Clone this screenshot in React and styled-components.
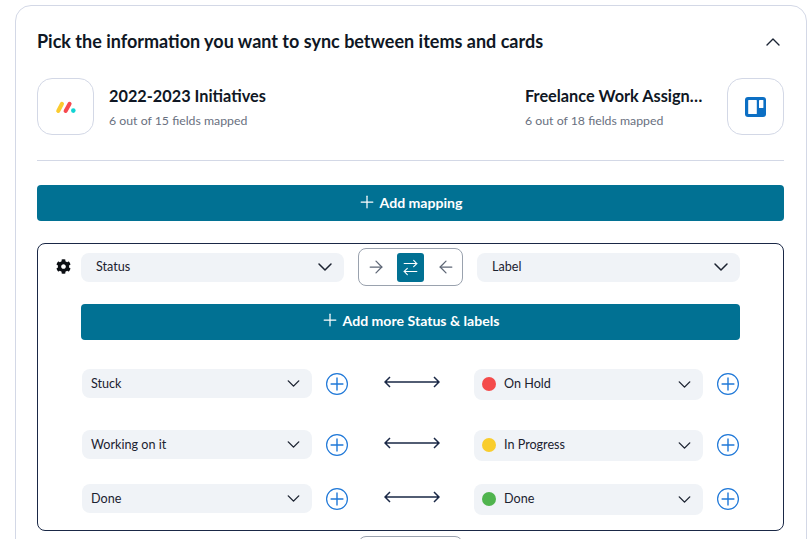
import React from 'react'
import styled, { createGlobalStyle } from 'styled-components'
import { ArrowLeft, ArrowRight, ArrowRightLeft, ChevronDown, ChevronUp, Plus } from 'lucide-react'
import { FaCog } from 'react-icons/fa'

const GlobalStyle = createGlobalStyle`
  html, body {
    margin: 0;
    height: 539px;
    overflow: hidden;
    background: #fff;
    font-family: 'Lato', sans-serif;
    color: #0f1724;
  }
  * { box-sizing: border-box; }
`

const Card = styled.section`
  margin: 5px 3px 0 15px;
  padding: 24px 22px 0 21px;
  border: 1px solid #d3d8e6;
  border-radius: 16px;
`
const TitleRow = styled.header`
  display: flex;
  align-items: center;
  justify-content: space-between;
  height: 24px;
`
const Title = styled.h2`
  margin: 0;
  padding-bottom: 2px;
  font-size: 18px;
  font-weight: 700;
  line-height: 24px;
`
const Collapse = styled.span`
  display: flex;
  margin-right: -1px;
  color: #1b2434;
`
const BoardsRow = styled.div`
  display: flex;
  justify-content: space-between;
  margin-top: 24px;
  padding-bottom: 25px;
  border-bottom: 1px solid #d3d8e6;
`
const Board = styled.div`
  display: flex;
  align-items: center;
  gap: ${p => p.$gap}px;
`
const LogoBox = styled.div`
  display: flex;
  align-items: center;
  justify-content: center;
  width: 57px;
  height: 57px;
  border: 1px solid #d3d8e6;
  border-radius: 15px;
`
const BoardText = styled.div`
  width: 178px;
  padding-top: 2px;
`
const BoardName = styled.div`
  font-size: 16.3px;
  font-weight: 700;
  line-height: 20px;
  white-space: nowrap;
`
const BoardMeta = styled.div`
  margin-top: 7px;
  font-size: 12.3px;
  line-height: 16px;
  color: #697080;
`
const AddButton = styled.button`
  display: flex;
  align-items: center;
  justify-content: center;
  gap: 3px;
  width: ${p => p.$width || '100%'};
  height: 36px;
  margin: ${p => p.$margin};
  padding: 0 2px ${p => p.$lift}px 0;
  border: 0;
  border-radius: 4px;
  background: #017193;
  color: #fff;
  font: 700 14.1px 'Lato', sans-serif;
`
const MappingBox = styled.div`
  margin-top: 22px;
  padding: 4px 0 15px;
  border: 1px solid #1a2846;
  border-radius: 8px;
`
const FieldRow = styled.div`
  display: flex;
  align-items: center;
`
const GearSlot = styled.span`
  display: flex;
  justify-content: center;
  width: 43px;
  padding: 0 0 1px 7px;
  color: #0c0f14;
  font-size: 15px;
`
const Select = styled.div`
  display: flex;
  flex: none;
  align-items: center;
  gap: 8px;
  width: ${p => p.$width}px;
  height: ${p => p.$height}px;
  padding: 0 ${p => p.$right}px 0 ${p => p.$left}px;
  border-radius: 8px;
  background: #f0f3f7;
  font-size: 12.6px;
  color: #1b2230;
`
const SelectLabel = styled.span`
  flex: 1;
  padding-bottom: ${p => p.$lift || 1}px;
`
const Dot = styled.span`
  width: 14px;
  height: 14px;
  margin-bottom: 1px;
  border-radius: 50%;
  background: ${p => p.$color};
`
const Direction = styled.div`
  display: flex;
  align-items: center;
  justify-content: center;
  gap: 8px;
  width: 105px;
  height: 38px;
  margin: 0 14px;
  border: 1px solid #9aa2ae;
  border-radius: 8px;
`
const DirectionOption = styled.span`
  display: flex;
  align-items: center;
  justify-content: center;
  width: 27px;
  height: 29px;
  border-radius: 3px;
  background: ${p => (p.$active ? '#017193' : 'transparent')};
  color: ${p => (p.$active ? '#fff' : '#5d6675')};
`
const ValueRow = styled.div`
  display: flex;
  align-items: flex-start;
  margin-top: ${p => p.$top}px;
  padding-left: 44px;
`
const AddValue = styled.svg`
  flex: none;
  width: 22px;
  height: 22px;
  margin: 4px 0 0 14px;
  fill: none;
  stroke: #1f78d8;
`
const LinkArrow = styled.svg`
  flex: none;
  width: 56px;
  height: 12px;
  margin: 7px 34px 0 36px;
  fill: none;
  stroke: #1a2846;
  stroke-width: 1.5;
`
const NextDirection = styled.div`
  width: 105px;
  height: 38px;
  margin: 5px auto 0;
  border: 1px solid #9aa2ae;
  border-radius: 8px;
`

const valueRows = [
  { top: 29, left: 'Stuck', right: 'On Hold', color: '#f44b4b' },
  { top: 30, left: 'Working on it', right: 'In Progress', color: '#f9cd2d' },
  { top: 23, left: 'Done', right: 'Done', color: '#50b44e' },
]

function MondayLogo() {
  return (
    <svg width="22" height="14" viewBox="55 100 22 14" fill="none">
      <path d="M58.2 111 62 103.8" stroke="#fbcb2f" strokeWidth="4" strokeLinecap="round" />
      <path d="M65.6 111 69.6 103.8" stroke="#f6494f" strokeWidth="4" strokeLinecap="round" />
      <circle cx="73.3" cy="110.6" r="2.3" fill="#11d3d3" />
    </svg>
  )
}

function TrelloLogo() {
  return (
    <svg width="21" height="20" viewBox="0 0 21 20">
      <rect width="21" height="20" rx="3" fill="#0c6fc4" />
      <rect x="3.2" y="3" width="8.6" height="14" rx="0.6" fill="#fff" />
      <rect x="14" y="3" width="4.4" height="8" rx="0.6" fill="#fff" />
    </svg>
  )
}

function PlusCircle() {
  return (
    <AddValue viewBox="0 0 22 22">
      <circle cx="11" cy="11" r="10.4" strokeWidth="1.2" />
      <path d="M4.6 11h12.8M11 4.6v12.8" strokeWidth="1.4" />
    </AddValue>
  )
}

export default function App() {
  return (
    <>
      <GlobalStyle />
      <Card>
        <TitleRow>
          <Title>Pick the information you want to sync between items and cards</Title>
          <Collapse><ChevronUp size={24} strokeWidth={1.4} /></Collapse>
        </TitleRow>

        <BoardsRow>
          <Board $gap={15}>
            <LogoBox><MondayLogo /></LogoBox>
            <BoardText>
              <BoardName>2022-2023 Initiatives</BoardName>
              <BoardMeta>6 out of 15 fields mapped</BoardMeta>
            </BoardText>
          </Board>
          <Board $gap={24}>
            <BoardText>
              <BoardName>Freelance Work Assign…</BoardName>
              <BoardMeta>6 out of 18 fields mapped</BoardMeta>
            </BoardText>
            <LogoBox><TrelloLogo /></LogoBox>
          </Board>
        </BoardsRow>

        <AddButton $margin="24px 0 0" $lift={2}>
          <Plus size={20} strokeWidth={1.5} />
          Add mapping
        </AddButton>

        <MappingBox>
          <FieldRow>
            <GearSlot><FaCog /></GearSlot>
            <Select $width={263} $height={29} $left={15} $right={7}>
              <SelectLabel>Status</SelectLabel>
              <ChevronDown size={24} strokeWidth={1.5} />
            </Select>
            <Direction>
              <DirectionOption><ArrowRight size={20} strokeWidth={1.5} /></DirectionOption>
              <DirectionOption $active><ArrowRightLeft size={19} strokeWidth={1.4} /></DirectionOption>
              <DirectionOption><ArrowLeft size={20} strokeWidth={1.5} /></DirectionOption>
            </Direction>
            <Select $width={263} $height={29} $left={15} $right={7}>
              <SelectLabel>Label</SelectLabel>
              <ChevronDown size={24} strokeWidth={1.5} />
            </Select>
          </FieldRow>

          <AddButton $width="659px" $margin="18px 0 0 43px" $lift={4}>
            <Plus size={20} strokeWidth={1.5} />
            Add more Status &amp; labels
          </AddButton>

          {valueRows.map(row => (
            <ValueRow key={row.left} $top={row.top}>
              <Select $width={230} $height={29} $left={9} $right={8}>
                <SelectLabel>{row.left}</SelectLabel>
                <ChevronDown size={21} strokeWidth={1.6} />
              </Select>
              <PlusCircle />
              <LinkArrow viewBox="0 0 56 12">
                <path d="M1 6H55M6 1 1 6l5 5M50 1l5 5-5 5" />
              </LinkArrow>
              <Select $width={229} $height={31} $left={8} $right={8}>
                <Dot $color={row.color} />
                <SelectLabel $lift={3}>{row.right}</SelectLabel>
                <ChevronDown size={21} strokeWidth={1.6} />
              </Select>
              <PlusCircle />
            </ValueRow>
          ))}
        </MappingBox>

        <NextDirection />
      </Card>
    </>
  )
}
